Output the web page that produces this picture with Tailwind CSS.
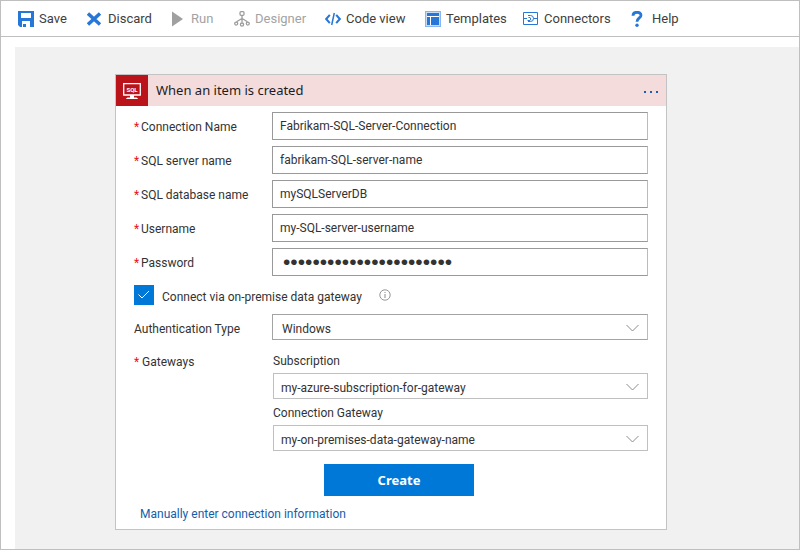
<!DOCTYPE html>
<html lang="en">
<head>
<meta charset="utf-8">
<meta name="viewport" content="width=device-width, initial-scale=1">
<title>Logic App Designer</title>
<script src="https://cdn.jsdelivr.net/npm/@tailwindcss/browser@4"></script>
</head>
<body class="min-h-screen flex flex-col border border-[#bfbfbf] bg-white font-[Roboto,'Noto_Sans',sans-serif] text-xs text-[#333333]">

<nav aria-label="Designer commands" class="grid h-9 shrink-0 grid-cols-[69px_83px_64px_91px_100px_98px_108px_auto] justify-start items-center border-b border-[#bfbfbf] pl-[17px] text-[13px] leading-5 whitespace-nowrap text-[#404040]">
  <button type="button" class="flex items-center gap-[5px]">
    <svg class="size-4" viewBox="0 0 16 16" fill="#2777d8" aria-hidden="true"><path fill-rule="evenodd" d="M0 0H16V16H2L0 14ZM3 2V7H13V2Z"/><path d="M4 10H12V16H8V13H5V16H4Z" fill="#fff"/></svg>
    <span>Save</span>
  </button>
  <button type="button" class="flex items-center gap-[5px]">
    <svg class="size-4" viewBox="0 0 16 16" fill="none" stroke="#2777d8" stroke-width="3.400" aria-hidden="true"><path d="M1 2.500 13 13.500M13 2.500 1 13.500"/></svg>
    <span>Discard</span>
  </button>
  <button type="button" disabled class="flex items-center gap-[5px] text-[#a3a3a3]">
    <svg class="size-4" viewBox="0 0 16 16" fill="#a0a0a0" aria-hidden="true"><path d="M2 0.500 13 8 2 15.500Z"/></svg>
    <span>Run</span>
  </button>
  <button type="button" disabled class="flex items-center gap-[5px] text-[#a3a3a3]">
    <svg class="size-4" viewBox="0 0 16 16" fill="none" stroke="#9c9c9c" stroke-width="1.300" aria-hidden="true"><rect x="6" y="0.700" width="4" height="3.600" rx="1"/><path d="M8 4.500V11.500M8 7.500 2.500 10.800M8 7.500 13.500 10.800"/><circle cx="2.200" cy="12.600" r="1.500"/><circle cx="8" cy="13.600" r="1.600"/><circle cx="13.800" cy="12.600" r="1.500"/></svg>
    <span>Designer</span>
  </button>
  <button type="button" class="flex items-center gap-[5px]">
    <svg class="size-4" viewBox="0 0 16 16" fill="none" stroke="#2777d8" stroke-width="2" aria-hidden="true"><path d="M4.800 3.800 1.200 8 4.800 12.200M11.200 3.800 14.800 8 11.200 12.200"/><path d="M9.300 2 6.700 14" stroke-width="1.500"/></svg>
    <span>Code view</span>
  </button>
  <button type="button" class="flex items-center gap-[5px]">
    <svg class="size-4" viewBox="0 0 16 16" aria-hidden="true"><path fill="#8ab6ee" d="M0 0H16V16H0Z"/><path fill="#c6dcf7" d="M1 1H15V15H1Z"/><path fill="#2777d8" d="M2 2H14V14H2Z"/><path fill="#fff" d="M2 5H14V6H6V14H5V6H2Z"/></svg>
    <span>Templates</span>
  </button>
  <button type="button" class="flex items-center gap-[5px]">
    <svg class="size-4" viewBox="0 0 16 16" fill="none" stroke="#2777d8" aria-hidden="true"><path d="M0.500 1.500H14.500V13.500H0.500Z"/><path d="M1 7.500H4M10.500 7.500H14.500M5 4.500H7.500A3 3 0 0 1 7.500 10.500H5M4.500 9.500H7A2 2 0 0 0 7 6.500H5.500"/></svg>
    <span>Connectors</span>
  </button>
  <button type="button" class="flex items-center gap-[5px]">
    <svg class="size-4" viewBox="0 0 16 16" fill="none" stroke="#2777d8" stroke-width="2.800" aria-hidden="true"><path d="M2 4.800C2 0 10 0.300 10 4.300C10 7 6 7 6 10.800"/><circle cx="6" cy="14.300" r="1.700" fill="#2777d8" stroke="none"/></svg>
    <span>Help</span>
  </button>
</nav>

<main class="mt-[10px] ml-[14px] flex grow justify-center bg-[#f1f1f1] pt-[27px] pr-[32px] pb-4">
  <form class="w-full max-w-[552px] self-start border border-[#c3c3c3] bg-white">
    <header class="flex h-[31px] items-center bg-[#f4dcdc]">
      <span class="flex h-full w-8 items-center justify-center bg-[#ba141a]">
        <svg class="h-[18px] w-[18px]" viewBox="0 0 18 18" aria-hidden="true"><path d="M0.700 1.700H17.300V13H0.700Z" fill="none" stroke="#fff" stroke-width="1.300"/><path d="M7 13H11V15.500H13.500Q15 16 15 17H3Q3 16 4.500 15.500H7Z" fill="#fff"/><text x="9" y="9.500" text-anchor="middle" font-size="6" font-weight="700" fill="#fff">SQL</text></svg>
      </span>
      <h1 class="grow pl-2 font-['Noto_Sans',sans-serif] text-[13px] text-[#1c1c1c]">When an item is created</h1>
      <button type="button" aria-label="More options" class="px-2 pt-[2px]"><svg class="h-[2px] w-[14px]" viewBox="0 0 14 2" fill="#1a5fb4" aria-hidden="true"><path d="M0 0H2V2H0ZM6 0H8V2H6ZM12 0H14V2H12Z"/></svg></button>
    </header>

    <div class="px-[18px] pt-[6px] pb-[6px]">
      <div class="grid grid-cols-[138px_1fr] items-center gap-y-[6px]">
        <label for="conn" class="pt-[2px]"><span class="inline-block w-[7px] text-[#e81123]">*</span>Connection Name</label>
        <input id="conn" type="text" value="Fabrikam-SQL-Server-Connection" class="h-7 w-full border border-[#999999] border-r-[#bbbbbb] px-[7px]">
        <label for="server" class="pt-[2px]"><span class="inline-block w-[7px] text-[#e81123]">*</span>SQL server name</label>
        <input id="server" type="text" value="fabrikam-SQL-server-name" class="h-7 w-full border border-[#999999] border-r-[#bbbbbb] px-[7px]">
        <label for="db" class="pt-[2px]"><span class="inline-block w-[7px] text-[#e81123]">*</span>SQL database name</label>
        <input id="db" type="text" value="mySQLServerDB" class="h-7 w-full border border-[#999999] border-r-[#bbbbbb] px-[7px]">
        <label for="user" class="pt-[2px]"><span class="inline-block w-[7px] text-[#e81123]">*</span>Username</label>
        <input id="user" type="text" value="my-SQL-server-username" autocomplete="off" class="h-7 w-full border border-[#999999] border-r-[#bbbbbb] px-[7px]">
        <label for="pass" class="pt-[2px]"><span class="inline-block w-[7px] text-[#e81123]">*</span>Password</label>
        <input id="pass" type="password" value="aaaaaaaaaaaaaaaaaaaaaaa" autocomplete="off" class="h-7 w-full border border-[#999999] border-r-[#bbbbbb] px-[10px] font-['Liberation_Sans',sans-serif] text-[21px]">
      </div>

      <div class="mt-[9px] flex h-5 items-center">
        <span class="grid size-5">
          <input id="gateway" type="checkbox" checked class="col-start-1 row-start-1 size-5 appearance-none bg-[#0078d7]">
          <svg class="pointer-events-none col-start-1 row-start-1 size-5" viewBox="0 0 20 20" fill="none" stroke="#fff" aria-hidden="true"><path d="M4.500 9.500 8 13 15 6"/></svg>
        </span>
        <label for="gateway" class="pt-[4px] pl-2">Connect via on-premise data gateway</label>
        <svg class="ml-[17px] size-3" viewBox="0 0 12 12" fill="none" stroke="#8a8a8a" role="img" aria-label="Information"><circle cx="6" cy="6" r="5.200" stroke-width="0.900"/><path d="M6 5V9M6 3V4"/></svg>
      </div>

      <div class="mt-[9px] grid grid-cols-[138px_1fr] items-center">
        <label for="auth" class="pt-[4px]">Authentication Type</label>
        <div class="grid items-center">
          <select id="auth" class="col-start-1 row-start-1 h-[26px] w-full appearance-none border border-[#a3a3a3] border-r-[#bbbbbb] bg-white px-[9px] pt-[4px]"><option>Windows</option></select>
          <svg class="pointer-events-none col-start-1 row-start-1 mt-[2px] mr-[9px] h-2 w-[13px] justify-self-end" viewBox="0 0 13 8" fill="none" stroke="#8c8c8c" aria-hidden="true"><path d="M0.500 1 6.500 7 12.500 1"/></svg>
        </div>
      </div>

      <fieldset class="mt-3 grid grid-cols-[138px_1fr]">
        <legend class="float-left h-5 w-[138px] leading-5"><span class="inline-block w-2 text-[#e81123]">*</span>Gateways</legend>
        <div class="col-start-2 flex flex-col pl-px">
          <label for="sub" class="h-[21px] leading-[18px]">Subscription</label>
          <div class="grid items-center">
            <select id="sub" class="col-start-1 row-start-1 h-[26px] w-full appearance-none border border-[#c0c0c0] bg-white px-[7px] pt-[4px]"><option>my-azure-subscription-for-gateway</option></select>
            <svg class="pointer-events-none col-start-1 row-start-1 mt-[2px] mr-[9px] h-2 w-[13px] justify-self-end" viewBox="0 0 13 8" fill="none" stroke="#8c8c8c" aria-hidden="true"><path d="M0.500 1 6.500 7 12.500 1"/></svg>
          </div>
          <label for="gw" class="mt-[5px] h-[21px] leading-[18px]">Connection Gateway</label>
          <div class="grid items-center">
            <select id="gw" class="col-start-1 row-start-1 h-[26px] w-full appearance-none border border-[#c0c0c0] bg-white px-[7px] pt-[4px]"><option>my-on-premises-data-gateway-name</option></select>
            <svg class="pointer-events-none col-start-1 row-start-1 mt-[2px] mr-[9px] h-2 w-[13px] justify-self-end" viewBox="0 0 13 8" fill="none" stroke="#8c8c8c" aria-hidden="true"><path d="M0.500 1 6.500 7 12.500 1"/></svg>
          </div>
        </div>
      </fieldset>

      <div class="mt-[13px] flex justify-center pl-4">
        <button type="submit" class="h-8 w-[150px] bg-[#0078d7] pt-[2px] font-['Noto_Sans',sans-serif] text-[13px] font-bold text-white">Create</button>
      </div>
      <a href="#manual" class="mt-[9px] ml-[6px] inline-block leading-[18px] text-[#135eab]">Manually enter connection information</a>
    </div>
  </form>
</main>

</body>
</html>
